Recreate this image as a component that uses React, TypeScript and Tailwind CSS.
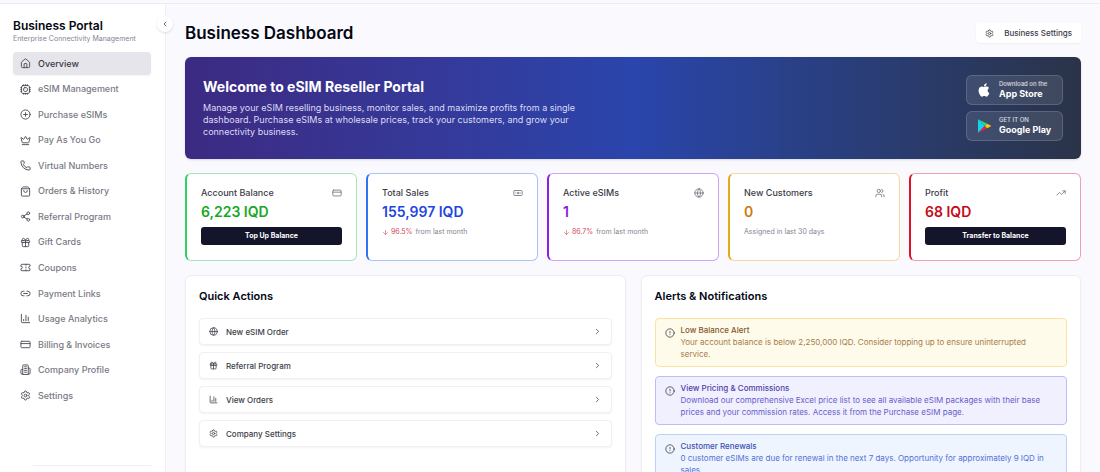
import {
  ArrowDown,
  Banknote,
  ChartColumn,
  ChevronLeft,
  ChevronRight,
  CircleAlert,
  CirclePlus,
  CreditCard,
  Crown,
  Gift,
  Globe,
  House,
  Link2,
  Phone,
  Settings,
  Share2,
  ShoppingBag,
  Ticket,
  TrendingUp,
  Users,
} from "lucide-react";
import type { ComponentType, ReactNode } from "react";

type Icon = ComponentType<{ size?: number; className?: string }>;

const ChipIcon: Icon = ({ size = 24, className }) => (
  <svg
    width={size}
    height={size}
    viewBox="0 0 24 24"
    fill="none"
    stroke="currentColor"
    strokeWidth="2"
    strokeLinecap="round"
    className={className}
  >
    <rect x="3.5" y="3.5" width="17" height="17" rx="2.5" />
    <rect x="8" y="8" width="8" height="8" rx="2" />
    <path d="M8 1.5v2M12 1.5v2M16 1.5v2M8 20.5v2M12 20.5v2M16 20.5v2M1.5 8h2M1.5 12h2M1.5 16h2M20.5 8h2M20.5 12h2M20.5 16h2" />
  </svg>
);

const BuildingIcon: Icon = ({ size = 24, className }) => (
  <svg
    width={size}
    height={size}
    viewBox="0 0 24 24"
    fill="none"
    stroke="currentColor"
    strokeWidth="2"
    strokeLinecap="round"
    strokeLinejoin="round"
    className={className}
  >
    <path d="M6 22V4a2 2 0 0 1 2-2h8a2 2 0 0 1 2 2v18Z" />
    <path d="M6 12H4a2 2 0 0 0-2 2v6a2 2 0 0 0 2 2h2" />
    <path d="M18 9h2a2 2 0 0 1 2 2v9a2 2 0 0 1-2 2h-2" />
    <path d="M10 6h4M10 10h4M10 14h4M10 18h4" />
  </svg>
);

const navItems: { label: string; icon: Icon }[] = [
  { label: "Overview", icon: House },
  { label: "eSIM Management", icon: ChipIcon },
  { label: "Purchase eSIMs", icon: CirclePlus },
  { label: "Pay As You Go", icon: Crown },
  { label: "Virtual Numbers", icon: Phone },
  { label: "Orders & History", icon: ShoppingBag },
  { label: "Referral Program", icon: Share2 },
  { label: "Gift Cards", icon: Gift },
  { label: "Coupons", icon: Ticket },
  { label: "Payment Links", icon: Link2 },
  { label: "Usage Analytics", icon: ChartColumn },
  { label: "Billing & Invoices", icon: CreditCard },
  { label: "Company Profile", icon: BuildingIcon },
  { label: "Settings", icon: Settings },
];

const stats: {
  label: string;
  value: string;
  icon: Icon;
  border: string;
  color: string;
  action?: string;
  change?: string;
  note?: string;
}[] = [
  {
    label: "Account Balance",
    value: "6,223 IQD",
    icon: CreditCard,
    border: "border-[#a5e6b8] border-l-[#2fcf60]",
    color: "text-[#16a91f]",
    action: "Top Up Balance",
  },
  {
    label: "Total Sales",
    value: "155,997 IQD",
    icon: Banknote,
    border: "border-[#a9c3f8] border-l-[#2f74f0]",
    color: "text-[#1f45e0]",
    change: "96.5%",
    note: "from last month",
  },
  {
    label: "Active eSIMs",
    value: "1",
    icon: Globe,
    border: "border-[#cda5f8] border-l-[#8a1fe6]",
    color: "text-[#8a14e6]",
    change: "86.7%",
    note: "from last month",
  },
  {
    label: "New Customers",
    value: "0",
    icon: Users,
    border: "border-[#f6d9a0] border-l-[#e5a91c]",
    color: "text-[#cc7a12]",
    note: "Assigned in last 30 days",
  },
  {
    label: "Profit",
    value: "68 IQD",
    icon: TrendingUp,
    border: "border-[#f0a0b0] border-l-[#dd1026]",
    color: "text-[#c40a18]",
    action: "Transfer to Balance",
  },
];

const quickActions: { label: string; icon: Icon }[] = [
  { label: "New eSIM Order", icon: Globe },
  { label: "Referral Program", icon: Gift },
  { label: "View Orders", icon: ChartColumn },
  { label: "Company Settings", icon: Settings },
];

const alerts = [
  {
    title: "Low Balance Alert",
    text: "Your account balance is below 2,250,000 IQD. Consider topping up to ensure uninterrupted service.",
    box: "border-[#fae3a0] bg-[#fffbea]",
    titleColor: "text-[#85592f]",
    textColor: "text-[#a67c4c]",
  },
  {
    title: "View Pricing & Commissions",
    text: "Download our comprehensive Excel price list to see all available eSIM packages with their base prices and your commission rates. Access it from the Purchase eSIM page.",
    box: "border-[#bdbcf7] bg-[#f0f0fe]",
    titleColor: "text-[#5040a8]",
    textColor: "text-[#6a5ccc]",
  },
  {
    title: "Customer Renewals",
    text: "0 customer eSIMs are due for renewal in the next 7 days. Opportunity for approximately 9 IQD in sales.",
    box: "border-[#bcd0fa] bg-[#eef5ff]",
    titleColor: "text-[#3f50b0]",
    textColor: "text-[#5470d8]",
  },
];

const Sidebar = () => (
  <aside className="relative w-[166px] shrink-0 border-r border-[#f0eff6] bg-white pl-[13px] pr-[14px] pt-[14px]">
    <button
      aria-label="Collapse sidebar"
      className="absolute -right-2 top-3 flex h-4 w-4 items-center justify-center rounded-full bg-white text-gray-800 shadow-sm"
    >
      <ChevronLeft size={8} />
    </button>
    <h2 className="text-xs font-semibold leading-4 text-gray-950">Business Portal</h2>
    <p className="text-[7px] leading-[9px] text-[#858592]">Enterprise Connectivity Management</p>
    <nav className="mt-[9px] flex h-[355px] flex-col justify-between">
      {navItems.map(({ label, icon: Icon }, i) => (
        <a
          key={label}
          href="#"
          className={
            "flex h-[23px] items-center gap-[7px] rounded px-[7px] text-[9px] font-medium " +
            (i === 0 ? "bg-[#e6e5eb] text-[#3a3a44] shadow-xs" : "text-[#7a7a84]")
          }
        >
          <Icon size={11} className="shrink-0 text-[#4a4a55]" />
          <span className="whitespace-nowrap">{label}</span>
        </a>
      ))}
    </nav>
    <hr className="ml-5 mt-[58px] border-[#f0f0f5]" />
  </aside>
);

const AppleLogo = () => (
  <svg viewBox="0 0 24 24" className="h-4 w-4 fill-white">
    <path d="M18.71 19.5c-.83 1.24-1.71 2.45-3.05 2.47-1.34.03-1.77-.79-3.29-.79-1.53 0-2 .77-3.27.82-1.31.05-2.3-1.32-3.14-2.53C4.25 17 2.94 12.45 4.7 9.39c.87-1.52 2.43-2.48 4.12-2.51 1.28-.02 2.5.87 3.29.87.78 0 2.26-1.07 3.81-.91.65.03 2.47.26 3.64 1.98-.09.06-2.17 1.28-2.15 3.81.03 3.02 2.65 4.03 2.68 4.04-.03.07-.42 1.44-1.38 2.83M13 3.5c.73-.83 1.94-1.46 2.94-1.5.13 1.17-.34 2.35-1.04 3.19-.69.85-1.83 1.51-2.95 1.42-.15-1.15.41-2.35 1.05-3.11z" />
  </svg>
);

const PlayLogo = () => (
  <svg viewBox="0 0 24 24" className="h-4 w-4">
    <path fill="#16d0f0" d="M3 2 13.2 12 3 22z" />
    <path fill="#1fdc80" d="M3 2 17 8.8 13.2 12z" />
    <path fill="#e8204c" d="M3 22 17 15.2 13.2 12z" />
    <path fill="#fcc80c" d="M17 8.8 23 12l-6 3.2L13.2 12z" />
  </svg>
);

const StoreLink = ({ logo, caption, name }: { logo: ReactNode; caption: string; name: string }) => (
  <a
    href="#"
    className="flex h-[30px] w-[97px] items-center gap-[7px] rounded-md border border-white/15 bg-white/10 pl-[9px] text-white"
  >
    {logo}
    <span className="flex flex-col whitespace-nowrap">
      <span className="text-[6px] font-medium leading-[8px] text-white/80">{caption}</span>
      <span className="text-[9px] font-bold leading-[12px]">{name}</span>
    </span>
  </a>
);

const Banner = () => (
  <section className="flex items-start justify-between rounded-md bg-linear-to-r from-[#3c2a82] via-[#2a45ac] to-[#2a3348] p-[18px] shadow">
    <div className="pt-[2px]">
      <h2 className="text-sm font-bold leading-5 text-white">Welcome to eSIM Reseller Portal</h2>
      <p className="mt-[5px] max-w-[374px] text-[9px] leading-[12px] text-[#dcdcf4]">
        Manage your eSIM reselling business, monitor sales, and maximize profits from a single dashboard. Purchase
        eSIMs at wholesale prices, track your customers, and grow your connectivity business.
      </p>
    </div>
    <div className="flex flex-col gap-[6px]">
      <StoreLink logo={<AppleLogo />} caption="Download on the" name="App Store" />
      <StoreLink logo={<PlayLogo />} caption="GET IT ON" name="Google Play" />
    </div>
  </section>
);

const StatCards = () => (
  <section className="mt-[14px] grid grid-cols-5 gap-[9px]">
    {stats.map(({ label, value, icon: Icon, border, color, action, change, note }) => (
      <div key={label} className={"h-[88px] rounded-md border border-l-2 bg-white px-[14px] pt-3 " + border}>
        <div className="flex items-center justify-between">
          <h3 className="text-[9px] font-medium leading-[14px] text-[#3c3c48]">{label}</h3>
          <Icon size={10} className="text-[#747482]" />
        </div>
        <p className={"mt-[3px] text-sm font-semibold leading-[17px] " + color}>{value}</p>
        {action && (
          <button className="mt-[6px] h-[18px] w-full rounded-[3px] bg-[#14142a] text-[7px] font-bold text-white">
            {action}
          </button>
        )}
        {note && (
          <p className="mt-[6px] flex items-center gap-[3px] text-[7px] leading-3 text-[#858592]">
            {change && (
              <span className="flex items-center gap-[2px] text-[#d04a5c]">
                <ArrowDown size={7} />
                {change}
              </span>
            )}
            {note}
          </p>
        )}
      </div>
    ))}
  </section>
);

const Panel = ({ title, children }: { title: string; children: ReactNode }) => (
  <section className="h-[240px] rounded-md border border-[#eeeef4] bg-white px-[13px] pt-3 shadow-xs">
    <h2 className="text-[11px] font-semibold leading-4 text-gray-950">{title}</h2>
    {children}
  </section>
);

export default function App() {
  return (
    <div className="flex h-screen flex-col overflow-hidden bg-[#faf9fe] pt-[3px] font-['Inter',sans-serif] text-gray-950">
      <div className="flex min-h-0 flex-1 border-t border-[#ececf4]">
        <Sidebar />
        <main className="min-w-0 flex-1 px-[19px] pt-[17px]">
          <header className="mb-3 flex h-6 items-center justify-between">
            <h1 className="text-[17px] font-semibold leading-6">Business Dashboard</h1>
            <button className="flex h-5 items-center gap-[10px] rounded-sm bg-white px-[9px] text-[8px] font-medium text-[#3c3c48] shadow-xs">
              <Settings size={9} />
              Business Settings
            </button>
          </header>
          <Banner />
          <StatCards />
          <div className="mt-[14px] grid grid-cols-2 gap-[15px]">
            <Panel title="Quick Actions">
              <div className="mt-[14px] flex flex-col gap-[7px]">
                {quickActions.map(({ label, icon: Icon }) => (
                  <button
                    key={label}
                    className="flex h-[27px] items-center gap-2 rounded-sm border border-[#f0f0f4] bg-white px-[9px] text-[8px] font-medium text-[#3c3c48] shadow-xs"
                  >
                    <Icon size={9} />
                    <span className="flex-1 text-left">{label}</span>
                    <ChevronRight size={9} />
                  </button>
                ))}
              </div>
            </Panel>
            <Panel title="Alerts & Notifications">
              <div className="mt-[14px] flex flex-col gap-[9px]">
                {alerts.map((a) => (
                  <div key={a.title} className={"flex gap-[6px] rounded border px-[9px] pb-[6px] pt-[5px] " + a.box}>
                    <CircleAlert size={10} className="mt-1 shrink-0 text-[#44444f]" />
                    <div>
                      <h3 className={"text-[8px] font-medium leading-3 " + a.titleColor}>{a.title}</h3>
                      <p className={"text-[8px] leading-[12px] " + a.textColor}>{a.text}</p>
                    </div>
                  </div>
                ))}
              </div>
            </Panel>
          </div>
        </main>
      </div>
    </div>
  );
}
